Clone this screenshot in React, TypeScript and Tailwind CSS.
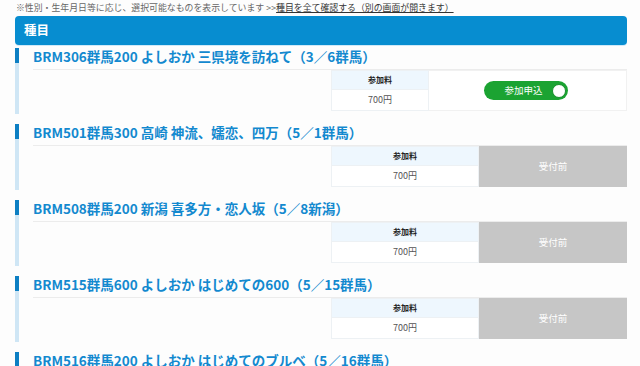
const font = { fontFamily: '"Noto Sans CJK JP", "Noto Sans", sans-serif' }

type Race = {
  title: string
  open: boolean
}

const races: Race[] = [
  { title: "BRM306群馬200 よしおか 三県境を訪ねて（3／6群馬）", open: true },
  { title: "BRM501群馬300 高崎 神流、嬬恋、四万（5／1群馬）", open: false },
  { title: "BRM508群馬200 新潟 喜多方・恋人坂（5／8新潟）", open: false },
  { title: "BRM515群馬600 よしおか はじめての600（5／15群馬）", open: false },
  { title: "BRM516群馬200 よしおか はじめてのブルベ（5／16群馬）", open: false },
]

function FeeTable({ wide }: { wide: boolean }) {
  return (
    <div className={`${wide ? "w-[148px]" : "w-[98px]"} flex flex-col border border-[#edf1f4] bg-white`}>
      <div className="h-[19px] bg-[#eef7fe] flex items-center justify-center text-[8px] font-bold text-[#222] border-b border-[#edf1f4]">
        参加料
      </div>
      <div className="flex-1 flex items-center justify-center text-[9px] text-[#555]">700円</div>
    </div>
  )
}

function RaceItem({ race }: { race: Race }) {
  return (
    <div className="flex mb-[10px]">
      <div className="w-[4px] bg-[#cfe6f5] flex flex-col">
        <div className="h-[15px] bg-[#0d7fc3]" />
      </div>
      <div className="flex-1 pl-[14px] pb-[3px]">
        <div className="h-[22px] border-b border-[#ececec] text-[13.5px] font-bold leading-[16px] text-[#1389cf] whitespace-nowrap">
          {race.title}
        </div>
        <div className="flex justify-end h-[41px]">
          {race.open ? (
            <>
              <FeeTable wide={false} />
              <div className="w-[198px] flex items-center justify-center border border-l-0 border-[#f1f1f1] bg-white">
                <div className="w-[84px] h-[19px] rounded-full bg-[#1ba332] flex items-center justify-between pl-[21px] pr-[2px] mr-[4px]">
                  <span className="text-[9.5px] text-white leading-none">参加申込</span>
                  <span className="w-[14px] h-[14px] rounded-full bg-white border-[1.5px] border-[#178f2b]" />
                </div>
              </div>
            </>
          ) : (
            <>
              <FeeTable wide={true} />
              <div className="w-[148px] flex items-center justify-center bg-[#c6c6c6] text-[9.5px] text-white">受付前</div>
            </>
          )}
        </div>
      </div>
    </div>
  )
}

export default function App() {
  return (
    <div className="w-[640px] h-[366px] overflow-hidden bg-[#fdfdfd] pl-[15px] pr-[13px]" style={font}>
      <div className="h-[16px] pl-[1px] pt-[2px] text-[8.9px] leading-[12px] text-[#666] whitespace-nowrap">
        ※性別・生年月日等に応じ、選択可能なものを表示しています &gt;&gt;
        <span className="underline text-[#333]">種目を全て確認する（別の画面が開きます）</span>
      </div>
      <div className="h-[29px] rounded-[4px] bg-[#078dd0] flex items-center pl-[9px] text-[12.5px] font-bold text-white shadow-[0_1px_0_#cfe9f8]">
        種目
      </div>
      <div className="pt-[3px]">
        {races.map((r) => (
          <RaceItem key={r.title} race={r} />
        ))}
      </div>
    </div>
  )
}
